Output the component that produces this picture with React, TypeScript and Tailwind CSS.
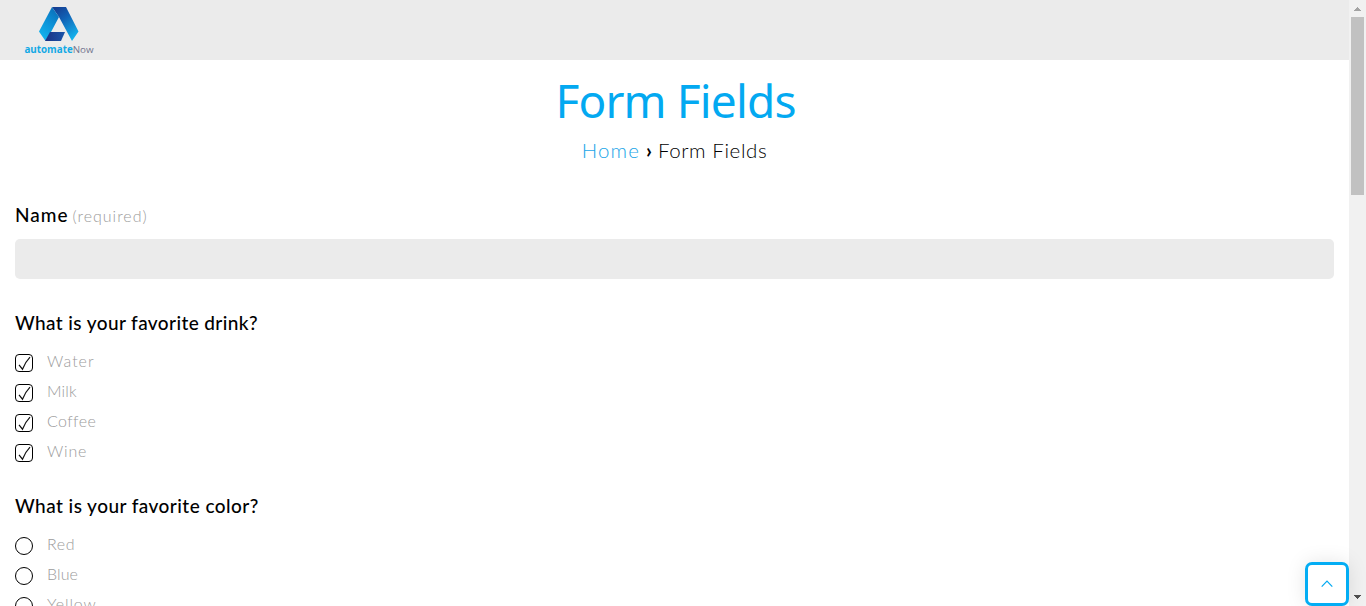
import React from "react";

const drinks = [
  { name: "Water", cls: "tracking-[1px]" },
  { name: "Milk", cls: "tracking-[0.2px]" },
  { name: "Coffee", cls: "tracking-[0.4px]" },
  { name: "Wine", cls: "tracking-[0.8px]" },
];
const colors = [
  { name: "Red", cls: "tracking-[0.6px]" },
  { name: "Blue", cls: "tracking-[0.1px]" },
  { name: "Yellow", cls: "tracking-[0.9px]" },
];

function Logo() {
  return (
    <div className="ml-6 flex w-[70px] flex-col items-center pt-[7px]">
      <svg width="40" height="34" viewBox="0 0 40 34" className="block">
        <defs>
          <linearGradient id="left" x1="0.8" y1="0" x2="0.3" y2="1">
            <stop offset="0" stopColor="#0b6db8" />
            <stop offset="0.5" stopColor="#0c93d8" />
            <stop offset="1" stopColor="#12b4ee" />
          </linearGradient>
          <linearGradient id="right" x1="0.2" y1="0" x2="0.8" y2="1">
            <stop offset="0" stopColor="#153f93" />
            <stop offset="0.35" stopColor="#1160b4" />
            <stop offset="1" stopColor="#13baf2" />
          </linearGradient>
          <linearGradient id="foot" x1="0" y1="0" x2="1" y2="0">
            <stop offset="0" stopColor="#1b3083" />
            <stop offset="1" stopColor="#1a55aa" />
          </linearGradient>
        </defs>
        <path d="M13 0H27L39.5 24.5L33 34L20 10L13 0Z" fill="url(#right)" />
        <path d="M13 0L20 10L12 25L6.5 34L0 24.5Z" fill="url(#left)" />
        <path d="M11 25H26L22 34H6Z" fill="url(#foot)" />
      </svg>
      <div className="mt-[2px] whitespace-nowrap font-[Open_Sans,sans-serif] text-[9.8px] leading-[13px] text-[#73758f]">
        <b className="font-bold text-[#12a9e5]">automate</b>Now
      </div>
    </div>
  );
}

function Scrollbar() {
  return (
    <div className="flex w-[17px] shrink-0 flex-col bg-[#f1f1f1]">
      <svg width="17" height="17" className="block shrink-0" shapeRendering="crispEdges">
        <path d="M8 7h1v1h1v1h1v1h1v1H5v-1h1v-1h1v-1h1z" fill="#a3a3a3" />
      </svg>
      <div className="ml-[2px] h-[178px] w-[13px] bg-[#c1c1c1]" />
      <div className="flex-1" />
      <svg width="17" height="17" className="block shrink-0" shapeRendering="crispEdges">
        <path d="M5 6h7v1h-1v1h-1v1h-1v1H8V9H7V8H6V7H5z" fill="#505050" />
      </svg>
    </div>
  );
}

const option = "flex h-[30px] items-center text-[16px] font-light text-[#9b9b9b]";

export default function App() {
  return (
    <div className="relative flex h-[606px] w-[1366px] overflow-hidden bg-white font-[Lato,sans-serif] text-black">
      <div className="flex min-w-0 flex-1 flex-col">
        <header className="h-[60px] shrink-0 bg-[#ebebeb]">
          <Logo />
        </header>
        <main className="flex flex-col px-[15px]">
          <h1 className="mt-[10px] h-[60px] pl-[2px] text-center font-[Noto_Sans,sans-serif] text-[46px] leading-[60px] tracking-[-0.85px] text-[#03a9f1]">
            Form Fields
          </h1>
          <nav className="mt-[5px] flex h-[30px] items-center justify-center gap-[6px] text-[20.5px] font-light">
            <a className="tracking-[1.1px] text-[#1ba5e8]">Home</a>
            <span className="font-bold">›</span>
            <span className="tracking-[0.6px]">Form Fields</span>
          </nav>
          <label className="mt-[35px] flex h-[30px] items-center gap-[4px] text-[19px] font-medium">
            <span className="tracking-[1px]">Name</span>
            <span className="pt-px text-[16px] font-light tracking-[1px] text-[#9b9b9b]">(required)</span>
          </label>
          <input className="mt-[9px] h-[40px] w-full rounded-[5px] bg-[#ebebeb] px-3 outline-none" />
          <h2 className="mt-[29px] flex h-[30px] items-center text-[19px] font-medium tracking-[0.4px]">
            <span>What is your favorite drink?</span>
          </h2>
          <div className="mt-[9px]">
            {drinks.map((d) => (
              <label key={d.name} className={option}>
                <span className="mr-[14px] mt-[2px] flex h-[18px] w-[18px] rounded-[4px] border border-black">
                  <svg width="16" height="16" fill="none" stroke="#111" strokeWidth="1.2">
                    <path d="M3 9.8L6.5 14.2Q9 7.5 14 2.2" />
                  </svg>
                </span>
                <span className={`${d.cls} -mt-[2px]`}>{d.name}</span>
              </label>
            ))}
          </div>
          <h2 className="mt-[24px] flex h-[30px] items-center text-[19px] font-medium tracking-[0.45px]">
            <span>What is your favorite color?</span>
          </h2>
          <div className="mt-[9px]">
            {colors.map((c) => (
              <label key={c.name} className={option}>
                <span className="mr-[14px] mt-[2px] h-[18px] w-[18px] rounded-full border border-black" />
                <span className={`${c.cls} -mt-[2px]`}>{c.name}</span>
              </label>
            ))}
          </div>
        </main>
      </div>
      <Scrollbar />
      <button className="absolute left-[1305px] top-[562px] flex h-[44px] w-[44px] items-center justify-center rounded-[7px] border-[3px] border-[#03adf4] bg-white shadow-[0_0_20px_rgba(0,0,0,0.1)]">
        <svg width="12" height="8" fill="none" stroke="#03a9f1" strokeWidth="1.2">
          <path d="M0.7 6.7L6 1.2L11.3 6.7" />
        </svg>
      </button>
    </div>
  );
}
